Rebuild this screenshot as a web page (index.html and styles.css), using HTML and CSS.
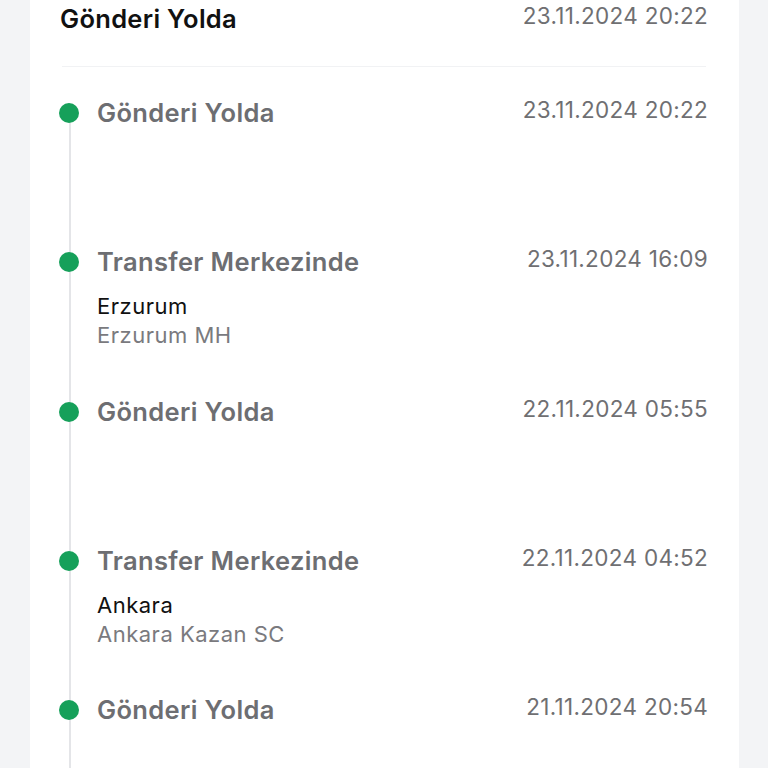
FILE: index.html
```html
<!DOCTYPE html>
<html lang="tr">
<head>
    <meta charset="UTF-8">
    <meta name="viewport" content="width=device-width, initial-scale=1.0">
    <title>Gönderi Takibi</title>
    <link rel="stylesheet" href="styles.css">
</head>
<body>
    <div class="card">
        <div class="card-head">
            <span class="head-title">Gönderi Yolda</span>
            <span class="head-date">23.11.2024 20:22</span>
        </div>
        <div class="divider"></div>

        <ul class="timeline">
            <li class="step">
                <span class="dot"></span>
                <div class="step-body">
                    <div class="step-row">
                        <span class="step-title">Gönderi Yolda</span>
                        <span class="step-date">23.11.2024 20:22</span>
                    </div>
                </div>
            </li>
            <li class="step">
                <span class="dot"></span>
                <div class="step-body">
                    <div class="step-row">
                        <span class="step-title">Transfer Merkezinde</span>
                        <span class="step-date">23.11.2024 16:09</span>
                    </div>
                    <div class="place">
                        <div class="city">Erzurum</div>
                        <div class="branch">Erzurum MH</div>
                    </div>
                </div>
            </li>
            <li class="step">
                <span class="dot"></span>
                <div class="step-body">
                    <div class="step-row">
                        <span class="step-title">Gönderi Yolda</span>
                        <span class="step-date">22.11.2024 05:55</span>
                    </div>
                </div>
            </li>
            <li class="step">
                <span class="dot"></span>
                <div class="step-body">
                    <div class="step-row">
                        <span class="step-title">Transfer Merkezinde</span>
                        <span class="step-date">22.11.2024 04:52</span>
                    </div>
                    <div class="place">
                        <div class="city">Ankara</div>
                        <div class="branch">Ankara Kazan SC</div>
                    </div>
                </div>
            </li>
            <li class="step">
                <span class="dot"></span>
                <div class="step-body">
                    <div class="step-row">
                        <span class="step-title">Gönderi Yolda</span>
                        <span class="step-date">21.11.2024 20:54</span>
                    </div>
                </div>
            </li>
        </ul>
    </div>
</body>
</html>
```

FILE: styles.css
```css
body {
    margin: 0;
    background: #f3f4f6;
    font-family: Inter, "Noto Sans", sans-serif;
    overflow: hidden;
}
.card {
    margin: 0 29px 0 30px;
    background: #fff;
    padding: 2px 31px 0 30px;
    min-height: 800px;
}
.card-head {
    display: flex;
    justify-content: space-between;
    align-items: flex-start;
}
.head-title {
    font-size: 25.5px;
    line-height: 33px;
    font-weight: 600;
    letter-spacing: 0.3px;
    color: #111;
}
.head-date {
    font-size: 22.5px;
    line-height: 28px;
    letter-spacing: 0.3px;
    color: #6f6f72;
}
.divider {
    height: 1px;
    background: #f1f2f4;
    margin: 31px 2px 30px 2px;
}
.timeline {
    list-style: none;
    margin: 0;
    padding: 0;
}
.step {
    position: relative;
    display: flex;
    gap: 18px;
    min-height: 149.25px;
}
.step::before {
    content: "";
    position: absolute;
    left: 9px;
    top: 16px;
    bottom: -16px;
    width: 2px;
    background: #e4e5e8;
}
.dot {
    position: relative;
    flex: none;
    width: 20px;
    height: 20px;
    margin-top: 6px;
    margin-left: -1px;
    border-radius: 50%;
    background: #16a05a;
}
.step-body {
    flex: 1;
}
.step-row {
    display: flex;
    justify-content: space-between;
    align-items: flex-start;
}
.step-title {
    font-size: 25.5px;
    line-height: 31px;
    font-weight: 600;
    letter-spacing: 0.35px;
    color: #6d6e72;
}
.step-date {
    font-size: 22.5px;
    line-height: 25px;
    letter-spacing: 0.3px;
    color: #6f6f72;
}
.place {
    margin-top: 15px;
    font-size: 22px;
    line-height: 29px;
    letter-spacing: 0.5px;
}
.city {
    color: #111;
}
.branch {
    color: #7a7a7e;
}
```
